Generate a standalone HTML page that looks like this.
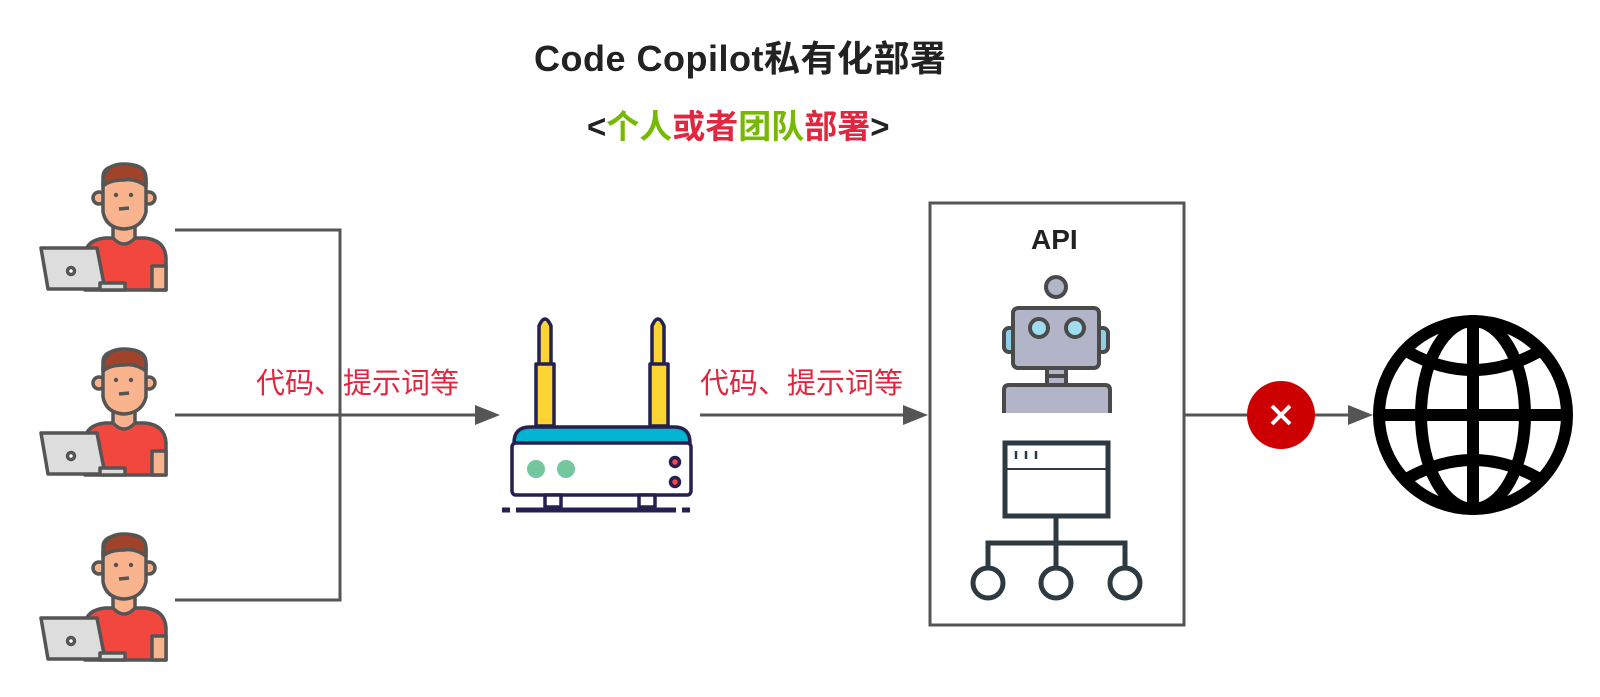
<!DOCTYPE html>
<html><head><meta charset="utf-8"><style>
html,body{margin:0;padding:0;background:#fff;}
body{width:1600px;height:697px;position:relative;overflow:hidden;font-family:"Liberation Sans","Noto Sans CJK SC",sans-serif;}
.t{position:absolute;white-space:nowrap;}
</style></head><body>
<div class="t" style="left:534px;top:30px;font-size:36px;font-weight:bold;color:#222;letter-spacing:0.5px;">Code Copilot私有化部署</div>
<div class="t" style="left:587px;top:100px;font-size:33px;font-weight:bold;color:#222;">&lt;<span style="color:#76b900">个人</span><span style="color:#e0273f">或者</span><span style="color:#76b900">团队</span><span style="color:#e0273f">部署</span>&gt;</div>
<div class="t" style="left:256px;top:360px;font-size:29px;color:#e0273f;">代码、提示词等</div>
<div class="t" style="left:700px;top:360px;font-size:29px;color:#e0273f;">代码、提示词等</div>
<div class="t" style="left:1031px;top:224px;font-size:28px;font-weight:bold;color:#222;">API</div>
<svg width="1600" height="697" style="position:absolute;left:0;top:0">
<defs>
<g id="p" stroke="#555" stroke-width="3.5" stroke-linejoin="round">
<path d="M85 290 L85 255 Q86 240 105 238 L145 238 Q165 240 166 258 L166 290 Z" fill="#f2473f"/>
<rect x="152" y="266" width="14" height="24" fill="#f9b48e"/>
<path d="M113 218 L113 238 Q124 250 135 238 L135 218 Z" fill="#f9b48e"/>
<circle cx="99" cy="198" r="6" fill="#f9b48e"/><circle cx="149" cy="198" r="6" fill="#f9b48e"/>
<path d="M103 178 Q102 165 124 165 Q146 165 146 180 L146 212 Q142 228 124 229 Q106 228 103 212 Z" fill="#f9b48e"/>
<path d="M103 186 Q102 164 124 164 Q146 164 146 178 L146 186 Q135 178 124 180 Q110 180 103 186 Z" fill="#a0432a"/>
<circle cx="116" cy="195" r="2.2" fill="#555" stroke="none"/><circle cx="131" cy="195" r="2.2" fill="#555" stroke="none"/>
<path d="M119 209 L129 208" fill="none"/>
<path d="M41 248 L97 248 L105 289 L48 289 Z" fill="#ddd"/>
<rect x="100" y="283" width="25" height="7" fill="#ddd"/>
<circle cx="71" cy="271" r="3.5" fill="#fff"/>
</g>
</defs>
<use href="#p" x="0" y="0"/>
<use href="#p" x="0" y="185"/>
<use href="#p" x="0" y="370"/>
<g stroke="#555" stroke-width="3" fill="none">
<path d="M175 230 H340 V600 H175 M175 415 H482 M700 415 H910 M1184 415 H1355"/>
</g>
<g fill="#555"><path d="M500 415 L475 405 L475 425 Z"/><path d="M928 415 L903 405 L903 425 Z"/><path d="M1373 415 L1348 405 L1348 425 Z"/></g>
<rect x="930" y="203" width="254" height="422" fill="none" stroke="#555" stroke-width="3"/>
<circle cx="1281" cy="415" r="34" fill="#c00"/>
<path d="M1272 406 L1290 424 M1290 406 L1272 424" stroke="#fff" stroke-width="4"/>
<!-- router -->
<g stroke="#25204f" stroke-width="3.5" stroke-linejoin="round">
<path d="M539 366 L539 326 Q545 312 551 326 L551 366 Z" fill="#fcd535"/>
<rect x="536" y="364" width="18" height="62" fill="#fcd535"/>
<path d="M652 366 L652 326 Q658 312 664 326 L664 366 Z" fill="#fcd535"/>
<rect x="650" y="364" width="18" height="62" fill="#fcd535"/>
<path d="M514 443 Q514 427 530 427 L674 427 Q690 427 690 443 Z" fill="#00b4d2"/>
<rect x="512" y="443" width="179" height="52" rx="4" fill="#fff"/>
<rect x="545" y="495" width="16" height="12" fill="#fff"/><rect x="639" y="495" width="16" height="12" fill="#fff"/>
<path d="M502 510 H690" stroke-dasharray="8 6 160 6" stroke-width="5"/>
<circle cx="675" cy="462" r="4.5" fill="#f44"/><circle cx="675" cy="482" r="4.5" fill="#f44"/>
</g>
<circle cx="536" cy="469" r="9" fill="#74c69d"/><circle cx="566" cy="469" r="9" fill="#74c69d"/>
<!-- robot -->
<g stroke="#4a4a4a" stroke-width="4">
<circle cx="1056" cy="287" r="10" fill="#b2b4c8"/>
<rect x="1047" y="366" width="19" height="19" fill="#b2b4c8"/>
<path d="M1056 376 H1047 M1056 376 H1066" />
<rect x="1004" y="328" width="12" height="24" rx="5" fill="#8fd0e8"/>
<rect x="1096" y="328" width="12" height="24" rx="5" fill="#8fd0e8"/>
<rect x="1013" y="308" width="86" height="60" rx="5" fill="#b2b4c8"/>
<circle cx="1039" cy="328" r="9" fill="#a0dcf0"/><circle cx="1075" cy="328" r="9" fill="#a0dcf0"/>
<path d="M1004 413 V390 Q1004 385 1009 385 H1105 Q1110 385 1110 390 V413" fill="#b2b4c8"/>
</g>
<g stroke="#2e3a42" stroke-width="5" fill="none">
<rect x="1005" y="443" width="103" height="73" fill="#fff"/>
<path d="M1005 469 H1108" stroke-width="2"/>
<path d="M1016 451 V459 M1026 451 V459 M1036 451 V459" stroke-width="2.5"/>
<path d="M1056 516 V543 M988 567 V543 H1125 V567 M1056 543 V567"/>
<circle cx="988" cy="583" r="15"/><circle cx="1056" cy="583" r="15"/><circle cx="1125" cy="583" r="15"/>
</g>
<!-- globe -->
<g stroke="#000" stroke-width="12" fill="none">
<circle cx="1473" cy="415" r="94"/>
<ellipse cx="1473" cy="415" rx="52" ry="94"/>
<path d="M1473 321 V509 M1379 415 H1567"/>
<path d="M1408 352 Q1473 388 1538 352 M1408 478 Q1473 442 1538 478"/>
</g>
</svg>
</body></html>
